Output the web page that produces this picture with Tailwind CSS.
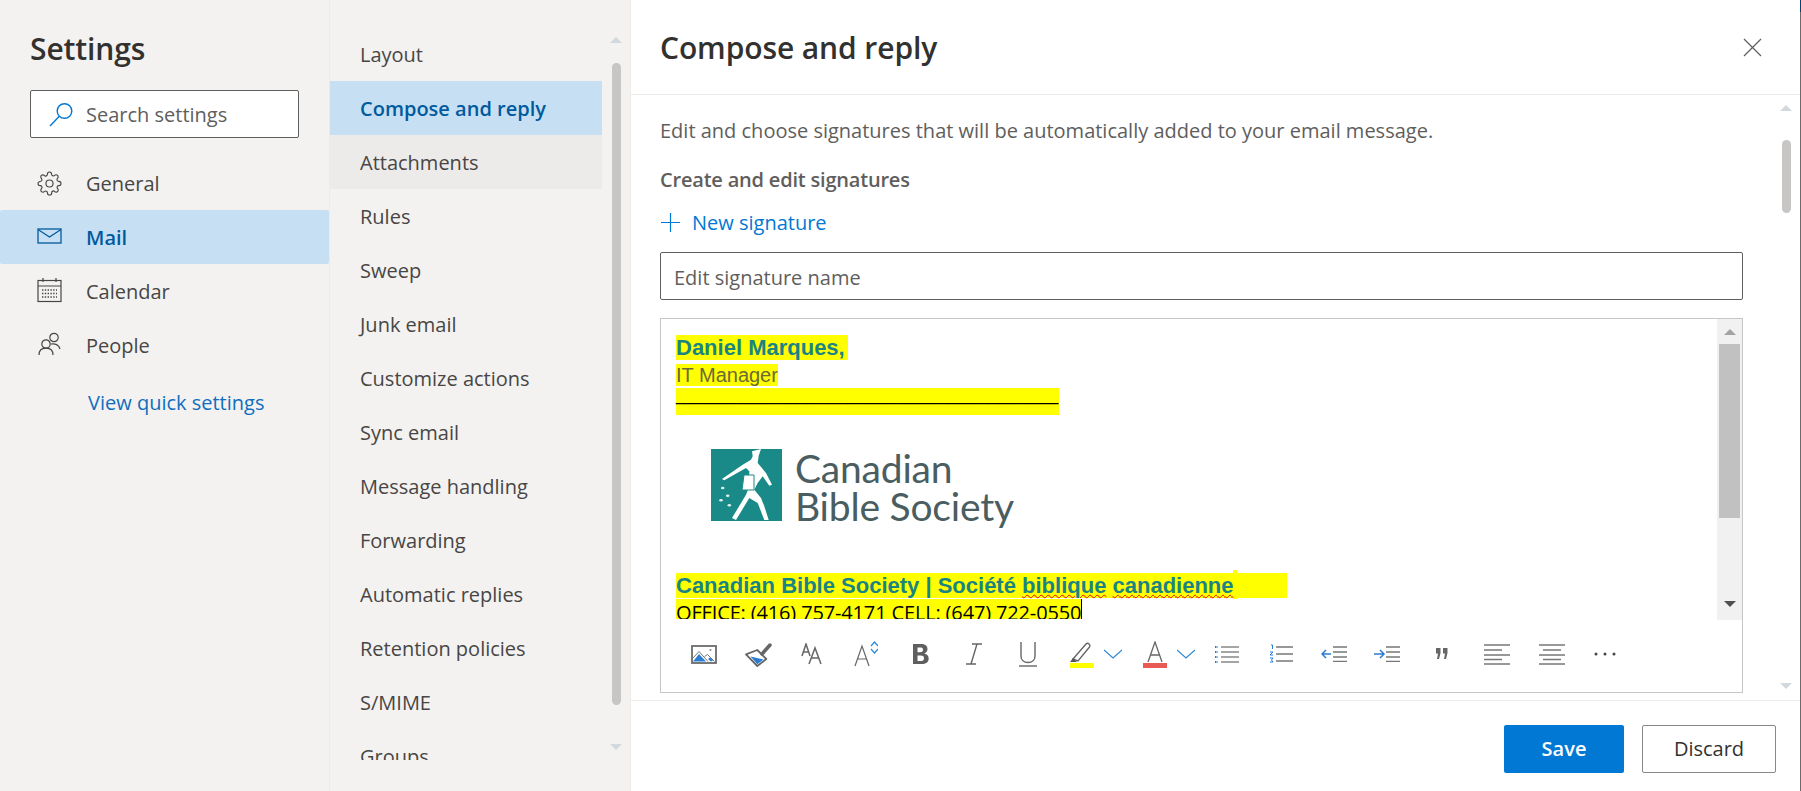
<!DOCTYPE html>
<html lang="en">
<head>
    <meta charset="UTF-8">
    <title>Settings - Compose and reply</title>
    <script src="https://cdn.jsdelivr.net/npm/@tailwindcss/browser@4"></script>
</head>
<body class="w-[1801px] h-[791px] overflow-hidden flex bg-white font-['Open_Sans',sans-serif] text-[20px] text-[#323130]">

    <!-- left nav -->
    <aside class="w-[330px] h-full shrink-0 bg-[#f3f2f1] border-r border-[#edebe9]">
        <h1 class="pl-[30px] pt-[28px] h-[90px] text-[30px] leading-[42px] font-semibold tracking-[-0.1px]">Settings</h1>
        <div class="ml-[30px] w-[269px] h-[48px] bg-white border border-[#605e5c] rounded-[2px] flex items-center">
            <svg class="ml-[18px] w-[25px] h-[25px] shrink-0" viewBox="0 0 25 25" fill="none" stroke="#0078d4" stroke-width="1.4"><circle cx="15.5" cy="9" r="7.3"/><path d="M10.3 14.2 1 24"/></svg>
            <span class="ml-[12px] pt-[2px] text-[#605e5c]">Search settings</span>
        </div>
        <nav class="mt-[18px]">
            <a class="h-[54px] flex items-center pl-[37px] text-[#484644]">
                <svg class="w-[25px] h-[25px] shrink-0" viewBox="0 0 24 24" fill="none" stroke="#484644" stroke-width="1.1"><circle cx="12" cy="12" r="3.4"/><path d="M19.4 15a1.65 1.65 0 0 0 .33 1.82l.06.06a2 2 0 0 1 0 2.83 2 2 0 0 1-2.83 0l-.06-.06a1.65 1.65 0 0 0-1.82-.33 1.65 1.65 0 0 0-1 1.51V21a2 2 0 0 1-2 2 2 2 0 0 1-2-2v-.09A1.65 1.65 0 0 0 9 19.4a1.65 1.65 0 0 0-1.82.33l-.06.06a2 2 0 0 1-2.83 0 2 2 0 0 1 0-2.83l.06-.06a1.65 1.65 0 0 0 .33-1.82 1.65 1.65 0 0 0-1.51-1H3a2 2 0 0 1-2-2 2 2 0 0 1 2-2h.09A1.65 1.65 0 0 0 4.6 9a1.65 1.65 0 0 0-.33-1.82l-.06-.06a2 2 0 0 1 0-2.83 2 2 0 0 1 2.83 0l.06.06a1.65 1.65 0 0 0 1.82.33H9a1.65 1.65 0 0 0 1-1.51V3a2 2 0 0 1 2-2 2 2 0 0 1 2 2v.09a1.65 1.65 0 0 0 1 1.51 1.65 1.65 0 0 0 1.82-.33l.06-.06a2 2 0 0 1 2.83 0 2 2 0 0 1 0 2.83l-.06.06a1.65 1.65 0 0 0-.33 1.82V9a1.65 1.65 0 0 0 1.51 1H21a2 2 0 0 1 2 2 2 2 0 0 1-2 2h-.09a1.65 1.65 0 0 0-1.51 1z"/></svg>
                <span class="ml-[24px] pt-[2px]">General</span>
            </a>
            <a class="h-[54px] flex items-center pl-[37px] bg-[#c7dff3] rounded-[2px] text-[#005a9e] font-semibold">
                <svg class="w-[25px] h-[25px] shrink-0 -mt-[2px]" viewBox="0 0 25 25" fill="none" stroke="#005a9e" stroke-width="1.3"><rect x="1" y="5" width="23" height="14"/><path d="M1 5.5 12.5 13 24 5.5"/></svg>
                <span class="ml-[24px] pt-[2px]">Mail</span>
            </a>
            <a class="h-[54px] flex items-center pl-[37px] text-[#484644]">
                <svg class="w-[25px] h-[25px] shrink-0 -mt-[2px]" viewBox="0 0 25 25" fill="none" stroke="#484644" stroke-width="1.2"><rect x="1" y="2.5" width="23" height="21"/><path d="M1 8h23M6 0v4M19 0v4"/><path d="M5 12h15M5 15.5h15M5 19h15" stroke-dasharray="1.4 1.4" stroke-width="1.4"/></svg>
                <span class="ml-[24px] pt-[2px]">Calendar</span>
            </a>
            <a class="h-[54px] flex items-center pl-[37px] text-[#484644]">
                <svg class="w-[25px] h-[25px] shrink-0 -mt-[4px]" viewBox="0 0 25 25" fill="none" stroke="#484644" stroke-width="1.2"><circle cx="9" cy="13" r="4.2"/><path d="M2 24c0-4.500 3-6.800 7-6.800s7 2.300 7 6.800"/><circle cx="17" cy="6.500" r="4.200"/><path d="M14 13c4-.8 8 .8 9 5"/></svg>
                <span class="ml-[24px] pt-[2px]">People</span>
            </a>
        </nav>
        <a class="block mt-[16px] ml-[88px] leading-[30px] text-[#106ebe]">View quick settings</a>
    </aside>

    <!-- mail settings list -->
    <section class="w-[301px] h-full shrink-0 bg-[#f3f2f1] flex border-r border-[#edebe9]">
        <div class="w-[272px] h-[760px] pt-[27px] overflow-hidden shrink-0 text-[#484644]">
            <a class="h-[54px] flex items-center pl-[30px] pt-[2px]">Layout</a>
            <a class="h-[54px] flex items-center pl-[30px] pt-[2px] bg-[#c7dff3] text-[#005a9e] font-semibold">Compose and reply</a>
            <a class="h-[54px] flex items-center pl-[30px] pt-[2px] bg-[#edebe9]">Attachments</a>
            <a class="h-[54px] flex items-center pl-[30px] pt-[2px]">Rules</a>
            <a class="h-[54px] flex items-center pl-[30px] pt-[2px]">Sweep</a>
            <a class="h-[54px] flex items-center pl-[30px] pt-[2px]">Junk email</a>
            <a class="h-[54px] flex items-center pl-[30px] pt-[2px]">Customize actions</a>
            <a class="h-[54px] flex items-center pl-[30px] pt-[2px]">Sync email</a>
            <a class="h-[54px] flex items-center pl-[30px] pt-[2px]">Message handling</a>
            <a class="h-[54px] flex items-center pl-[30px] pt-[2px]">Forwarding</a>
            <a class="h-[54px] flex items-center pl-[30px] pt-[2px]">Automatic replies</a>
            <a class="h-[54px] flex items-center pl-[30px] pt-[2px]">Retention policies</a>
            <a class="h-[54px] flex items-center pl-[30px] pt-[2px]">S/MIME</a>
            <a class="h-[54px] flex items-center pl-[30px] pt-[2px]">Groups</a>
        </div>
        <div class="w-[28px] flex flex-col items-center">
            <div class="mt-[37px] w-0 h-0 border-x-[6px] border-x-transparent border-b-[6px] border-b-[#d2d9de]"></div>
            <div class="mt-[20px] w-[9px] h-[642px] rounded-full bg-[#c8c6c4]"></div>
            <div class="mt-[39px] w-0 h-0 border-x-[6px] border-x-transparent border-t-[6px] border-t-[#d2d9de]"></div>
        </div>
    </section>

    <!-- compose and reply panel -->
    <main class="flex-1 h-full flex flex-col min-w-0">
        <header class="h-[95px] shrink-0 border-b border-[#edebe9] flex items-center justify-between pl-[29px] pr-[38px]">
            <h2 class="text-[30px] font-semibold tracking-[-0.1px] pt-[1px]">Compose and reply</h2>
            <svg class="w-[19px] h-[19px]" viewBox="0 0 19 19" fill="none" stroke="#605e5c" stroke-width="1.2"><path d="M1 1l17 17M18 1 1 18"/></svg>
        </header>

        <div class="h-[605px] shrink-0 flex overflow-hidden">
            <div class="w-[1141px] pl-[29px] shrink-0">
                <p class="mt-[20px] pt-[1px] h-[30px] leading-[30px] text-[#605e5c]">Edit and choose signatures that will be automatically added to your email message.</p>
                <h3 class="mt-[20px] leading-[30px] font-semibold tracking-[-0.2px] text-[#605e5c]">Create and edit signatures</h3>
                <a class="mt-[12px] h-[30px] flex items-center text-[#0078d4]">
                    <svg class="ml-[1px] w-[19px] h-[19px]" viewBox="0 0 19 19" fill="none" stroke="#0078d4" stroke-width="1.2"><path d="M9.500 0v19M0 9.500h19"/></svg>
                    <span class="ml-[12px] pt-[2px]">New signature</span>
                </a>
                <div class="mt-[15px] h-[48px] w-[1083px] bg-white border border-[#605e5c] rounded-[2px] flex items-center pl-[13px] pt-[3px] text-[#605e5c]">Edit signature name</div>

                <!-- signature editor -->
                <div class="mt-[18px] w-[1083px] h-[375px] border border-[#c8c6c4] flex flex-col">
                    <div class="h-[301px] shrink-0 flex">
                        <div class="flex-1 pl-[15px] overflow-hidden font-['Liberation_Sans',sans-serif] text-[#1a8484]">
                            <div class="mt-[16px] h-[25px] leading-[25px] w-[172px] bg-[#ffff00] text-[22px] font-bold whitespace-nowrap">Daniel Marques,</div>
                            <div class="mt-[4px] h-[22px] leading-[22px] w-[102px] bg-[#ffff00] text-[20px] text-[#6a6a3a] whitespace-nowrap">IT Manager</div>
                            <div class="mt-[2px] h-[27px] w-[383px] bg-[#ffff00] text-[18.1px] leading-[13px] text-black whitespace-nowrap">______________________________________</div>

                            <div class="mt-[34px] ml-[35px] flex items-start h-[72px]">
                                <svg class="w-[71px] h-[72px] shrink-0" viewBox="0 0 71 72">
                                    <rect width="71" height="72" fill="#1a8a88"/>
                                    <path d="M41 2.300 50 0 47.700 6.700 46.700 14 55 24 61 35.700 58.300 36.700 51.700 27.300 46.700 34 43.300 40.700 50 49 53.300 57.300 57.700 71H53.300L46.700 54 38.300 49 25 71 21 69 35 45.700 38.300 37.300V22.300L35 19 13.300 31.300 11 30 31.700 15.700 40 10.700 41.700 7.300z" fill="#fff"/>
                                    <path d="M33 26h10v15H31z" fill="#fff" stroke="#1a8a88" stroke-width="1"/>
                                    <g fill="#dff0ef"><ellipse cx="11.700" cy="39" rx="1.800" ry="1.300"/><ellipse cx="16.700" cy="46.700" rx="1.800" ry="1.300"/><ellipse cx="10" cy="51.300" rx="1.800" ry="1.300"/><ellipse cx="18.300" cy="56.300" rx="1.800" ry="1.300"/></g>
                                </svg>
                                <div class="ml-[13px] font-['Lato',sans-serif] text-[#4a5d60] text-[39px] leading-[38px] tracking-[-0.2px] whitespace-nowrap">
                                    <div class="h-[38px]">Canadian</div>
                                    <div class="h-[38px]">Bible Society</div>
                                </div>
                            </div>

                            <div class="relative mt-[52px] h-[25px] leading-[25px] w-[611px] bg-[#ffff00] text-[22px] font-bold whitespace-nowrap"><span class="absolute left-[557px] -top-[3px] w-[4px] h-[29px] bg-[#ffff00]"></span><span class="relative">Canadian Bible Society | Société <span class="underline decoration-wavy decoration-[#e00] decoration-1">biblique</span> <span class="underline decoration-wavy decoration-[#e00] decoration-1">canadienne</span></span></div>
                            <div class="mt-[1px] h-[20px] overflow-hidden leading-[28px] w-fit bg-[#ffff00] border-r border-black text-black text-[20px] font-['Open_Sans',sans-serif] tracking-[-0.15px] whitespace-nowrap">OFFICE: (416) 757-4171 CELL: (647) 722-0550</div>
                        </div>
                        <!-- inner scrollbar -->
                        <div class="w-[25px] shrink-0 bg-[#f1f1f1] flex flex-col items-center">
                            <div class="mt-[10px] w-0 h-0 border-x-[6px] border-x-transparent border-b-[6px] border-b-[#a3a3a3]"></div>
                            <div class="mt-[9px] w-[21px] h-[174px] bg-[#c1c1c1]"></div>
                            <div class="mt-[83px] w-0 h-0 border-x-[6px] border-x-transparent border-t-[6px] border-t-[#505050]"></div>
                        </div>
                    </div>

                    <!-- formatting toolbar -->
                    <div class="flex-1 flex items-center pl-[16px] -mt-[4px]">
                        <span class="w-[54px] flex justify-center">
                            <svg class="w-[26px] h-[19px]" viewBox="0 0 26 19"><rect x="1" y="1" width="24" height="17" fill="none" stroke="#6b6b6b" stroke-width="1.800"/><path d="M2 16.500 8 9l7 7.500z" fill="#2b7cd3"/><path d="M2 13 8 6.500l9 10M13.500 11.500 16.500 9.500l7 7" fill="none" stroke="#777" stroke-width="1"/><path d="M17 14l2-1.500 3 3-2 1z" fill="#2b7cd3"/><circle cx="19.500" cy="5" r="1" fill="#888"/></svg>
                        </span>
                        <span class="w-[54px] flex justify-center">
                            <svg class="w-[28px] h-[28px]" viewBox="0 0 28 28"><path d="M2 14.300 13.300 10 22.300 19 13.300 26z" fill="#fff" stroke="#666" stroke-width="1.800" stroke-linejoin="round"/><path d="M6.500 16.500 19.500 19.500 13.300 24.300z" fill="#2b7cd3"/><path d="M18 14 26 5" fill="none" stroke="#666" stroke-width="3.500" stroke-linecap="round"/></svg>
                        </span>
                        <span class="w-[54px] flex justify-center">
                            <svg class="w-[22px] h-[22px]" viewBox="0 0 22 22" fill="none" stroke="#666" stroke-width="1.500"><path d="M1 13 5 1l4 12M2.500 9h5"/><path d="M8 21l6-16 6 16M10 15h8"/></svg>
                        </span>
                        <span class="w-[54px] flex justify-center">
                            <svg class="w-[24px] h-[26px]" viewBox="0 0 24 26" fill="none"><path d="M1 25 8 5l7 20M3.500 18h9" stroke="#666" stroke-width="1.200"/><path d="M17 5l3.500-4L24 5M17 8l3.500 4L24 8" stroke="#2b88d8" stroke-width="1.200"/></svg>
                        </span>
                        <span class="w-[54px] flex justify-center">
                            <svg class="w-[17px] h-[22px]" viewBox="0 0 17 22"><path d="M1 1h8c4 0 6.500 1.800 6.500 5 0 2.200-1.200 3.800-3.200 4.500 2.800.6 4.400 2.500 4.400 5 0 3.800-3 5.500-7 5.500H1zM5.500 4.500v4.800h2.500c2 0 3-.8 3-2.500s-1-2.300-3-2.300zM5.500 12.500v5.500h3c2.200 0 3.500-.8 3.500-2.800s-1.300-2.700-3.500-2.700z" fill="#5f5f5f" fill-rule="evenodd"/></svg>
                        </span>
                        <span class="w-[54px] flex justify-center">
                            <svg class="w-[16px] h-[22px]" viewBox="0 0 16 22" fill="none" stroke="#666" stroke-width="1.400"><path d="M6 1h10M0 21h10M11 1 5 21"/></svg>
                        </span>
                        <span class="w-[54px] flex justify-center">
                            <svg class="w-[18px] h-[25px]" viewBox="0 0 18 25" fill="none" stroke="#666" stroke-width="1.400"><path d="M2 0v14c0 4 3 6.500 7 6.500s7-2.500 7-6.500V0"/><path d="M0 24h18" /></svg>
                        </span>
                        <span class="w-[73px] pl-[7px] pr-[6px] flex items-center justify-between">
                            <svg class="w-[24px] h-[27px] ml-[8px]" viewBox="0 0 24 27"><path d="M3 18 16 3c2-2 5 1 3.500 3L8 20z" fill="none" stroke="#666" stroke-width="1.400"/><path d="M3 17l4 4H0z" fill="#555"/><rect y="22" width="24" height="5" fill="#ffff00"/></svg>
                            <svg class="w-[18px] h-[10px]" viewBox="0 0 18 10" fill="none" stroke="#2b88d8" stroke-width="1.200"><path d="M0 1l9 8 9-8"/></svg>
                        </span>
                        <span class="w-[72px] pl-[7px] pr-[5px] flex items-center justify-between">
                            <svg class="w-[24px] h-[27px] ml-[8px]" viewBox="0 0 24 27" fill="none"><path d="M5 21 12 1l7 20M7.500 14h9" stroke="#666" stroke-width="1.300"/><rect y="22" width="24" height="5" fill="#ea5a54"/></svg>
                            <svg class="w-[18px] h-[10px]" viewBox="0 0 18 10" fill="none" stroke="#2b88d8" stroke-width="1.200"><path d="M0 1l9 8 9-8"/></svg>
                        </span>
                        <span class="w-[54px] flex justify-center">
                            <svg class="w-[24px] h-[18px]" viewBox="0 0 24 18" fill="none"><path d="M6 2h18M6 7h18M6 12h18M6 17h18" stroke="#888" stroke-width="1.500"/><path d="M0 2h3M0 7h3M0 12h3M0 17h3" stroke="#2b7cd3" stroke-width="2" stroke-dasharray="1.500 1"/></svg>
                        </span>
                        <span class="w-[54px] flex justify-center">
                            <svg class="w-[24px] h-[20px]" viewBox="0 0 24 20" fill="none"><path d="M7 3h17M7 10h17M7 17h17" stroke="#777" stroke-width="1.500"/><path d="M2 1h1.500v4M1 8h3l-3 3h3M1 14h3l-1.500 2L4 18H1" stroke="#2b7cd3" stroke-width="1"/></svg>
                        </span>
                        <span class="w-[52px] flex justify-center">
                            <svg class="w-[26px] h-[16px]" viewBox="0 0 26 16" fill="none"><path d="M12 1h14M12 6h14M12 11h14M12 15.500h14" stroke="#777" stroke-width="1.300"/><path d="M10 8H1M5 4 1 8l4 4" stroke="#2b7cd3" stroke-width="1.500"/></svg>
                        </span>
                        <span class="w-[54px] flex justify-center">
                            <svg class="w-[26px] h-[16px]" viewBox="0 0 26 16" fill="none"><path d="M12 1h14M12 6h14M12 11h14M12 15.500h14" stroke="#777" stroke-width="1.300"/><path d="M0 8h9M6 4l4 4-4 4" stroke="#2b7cd3" stroke-width="1.500"/></svg>
                        </span>
                        <span class="w-[56px] flex justify-center">
                            <svg class="w-[12px] h-[12px]" viewBox="0 0 12 12" fill="#666"><path d="M0 0h4.500v5L3 11H1l1-5.500H0zM7 0h4.500v5L10 11H8l1-5.500H7z"/></svg>
                        </span>
                        <span class="w-[54px] flex justify-center">
                            <svg class="w-[26px] h-[21px]" viewBox="0 0 26 21" fill="none" stroke="#777" stroke-width="1.400"><path d="M0 1h26M0 6h18M0 11h26M0 15.500h18M0 20h26"/></svg>
                        </span>
                        <span class="w-[55px] flex justify-center">
                            <svg class="w-[26px] h-[21px]" viewBox="0 0 26 21" fill="none" stroke="#777" stroke-width="1.400"><path d="M0 1h26M4 6h18M0 11h26M4 15.500h18M0 20h26"/></svg>
                        </span>
                        <span class="w-[52px] flex justify-center">
                            <svg class="w-[22px] h-[4px]" viewBox="0 0 22 4" fill="#444"><circle cx="2" cy="2" r="1.500"/><circle cx="11" cy="2" r="1.500"/><circle cx="20" cy="2" r="1.500"/></svg>
                        </span>
                    </div>
                </div>
            </div>
            <!-- panel scrollbar -->
            <div class="w-[28px] flex flex-col items-center">
                <div class="mt-[10px] w-0 h-0 border-x-[6px] border-x-transparent border-b-[6px] border-b-[#d2d9de]"></div>
                <div class="mt-[29px] w-[9px] h-[73px] rounded-full bg-[#c8c6c4]"></div>
                <div class="mt-[470px] w-0 h-0 border-x-[6px] border-x-transparent border-t-[6px] border-t-[#d2d9de]"></div>
            </div>
        </div>

        <footer class="flex-1 border-t border-[#edebe9] flex justify-end items-start pt-[24px] pr-[24px] gap-[18px]">
            <button class="w-[120px] h-[48px] rounded-[2px] bg-[#0078d4] text-white font-semibold">Save</button>
            <button class="w-[134px] h-[48px] rounded-[2px] bg-white border border-[#8a8886] font-medium text-[#323130]">Discard</button>
        </footer>
    </main>
    <div class="w-px h-full shrink-0 bg-[#6b6b6b]"><div class="h-[12px] bg-[#004578]"></div></div>
</body>
</html>
